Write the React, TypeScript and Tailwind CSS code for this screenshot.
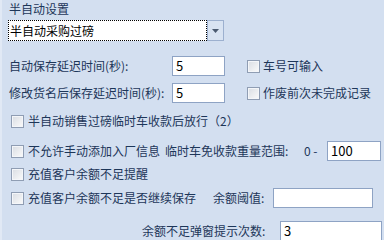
import React from "react";

const font = { fontFamily: '"Noto Sans CJK SC", "Noto Sans", sans-serif' };

function Box({ className = "" }: { className?: string }) {
  return (
    <span
      className={
        "inline-block w-[13px] h-[13px] shrink-0 border border-[#8f9db3] bg-gradient-to-br from-[#d9dde3] to-[#fbfbfb] shadow-[inset_0_0_0_1px_#f4f6f9] " +
        className
      }
    />
  );
}

function Input({ value = "", className = "" }: { value?: string; className?: string }) {
  return (
    <div
      className={
        "h-[20px] border border-[#8ea3c4] bg-white text-black text-[13px] leading-[18px] pl-[3px] " +
        className
      }
    >
      {value}
    </div>
  );
}

export default function App() {
  return (
    <div
      className="w-[384px] h-[240px] overflow-hidden bg-[#d3dff0] text-[#1d3659] text-[12px] leading-[16px] border-l-2 border-[#e1e9f5] relative"
      style={font}
    >
      <div className="flex flex-col pl-[7px]">
        <div className="h-[18px] flex items-center text-[12px]">半自动设置</div>
        <div className="mt-[2px] h-[21px] w-[216px] flex ml-[-1px]">
          <div className="flex-1 bg-white border border-dotted border-black flex items-center pl-[1px] text-black text-[12px]">
            半自动采购过磅
          </div>
          <div className="w-[17px] border border-[#9cb0cf] bg-[#d8e3f2] flex items-center justify-center">
            <svg width="7" height="4" viewBox="0 0 7 4">
              <path d="M0 0h7L3.5 4z" fill="#4a5a70" />
            </svg>
          </div>
        </div>

        <div className="mt-[15px] h-[20px] flex items-center">
          <span className="w-[163px]">自动保存延迟时间(秒):</span>
          <Input value="5" className="w-[53px]" />
          <Box className="ml-[22px]" />
          <span className="ml-[3px]">车号可输入</span>
        </div>
        <div className="mt-[7px] h-[20px] flex items-center">
          <span className="w-[163px] whitespace-nowrap">修改货名后保存延迟时间(秒):</span>
          <Input value="5" className="w-[53px]" />
          <Box className="ml-[22px]" />
          <span className="ml-[3px]">作废前次未完成记录</span>
        </div>

        <div className="mt-[8px] h-[20px] flex items-center pl-[2px]">
          <Box />
          <span className="ml-[4px]">半自动销售过磅临时车收款后放行（2）</span>
        </div>

        <div className="mt-[10px] h-[20px] flex items-center pl-[2px]">
          <Box />
          <span className="ml-[4px] w-[137px] whitespace-nowrap">不允许手动添加入厂信息</span>
          <span className="w-[139px] whitespace-nowrap">临时车免收款重量范围:</span>
          <span className="w-[23px] whitespace-nowrap">0 -</span>
          <Input value="100" className="w-[54px]" />
        </div>

        <div className="mt-[3px] h-[20px] flex items-center pl-[2px]">
          <Box />
          <span className="ml-[4px]">充值客户余额不足提醒</span>
        </div>

        <div className="mt-[4px] h-[20px] flex items-center pl-[2px]">
          <Box />
          <span className="ml-[4px] w-[185px] whitespace-nowrap">充值客户余额不足是否继续保存</span>
          <span className="w-[60px] whitespace-nowrap">余额阈值:</span>
          <Input className="w-[100px]" />
        </div>

        <div className="mt-[13px] h-[20px] flex items-center">
          <span className="ml-[133px] w-[138px] whitespace-nowrap">余额不足弹窗提示次数:</span>
          <Input value="3" className="w-[102px]" />
        </div>
      </div>
    </div>
  );
}
